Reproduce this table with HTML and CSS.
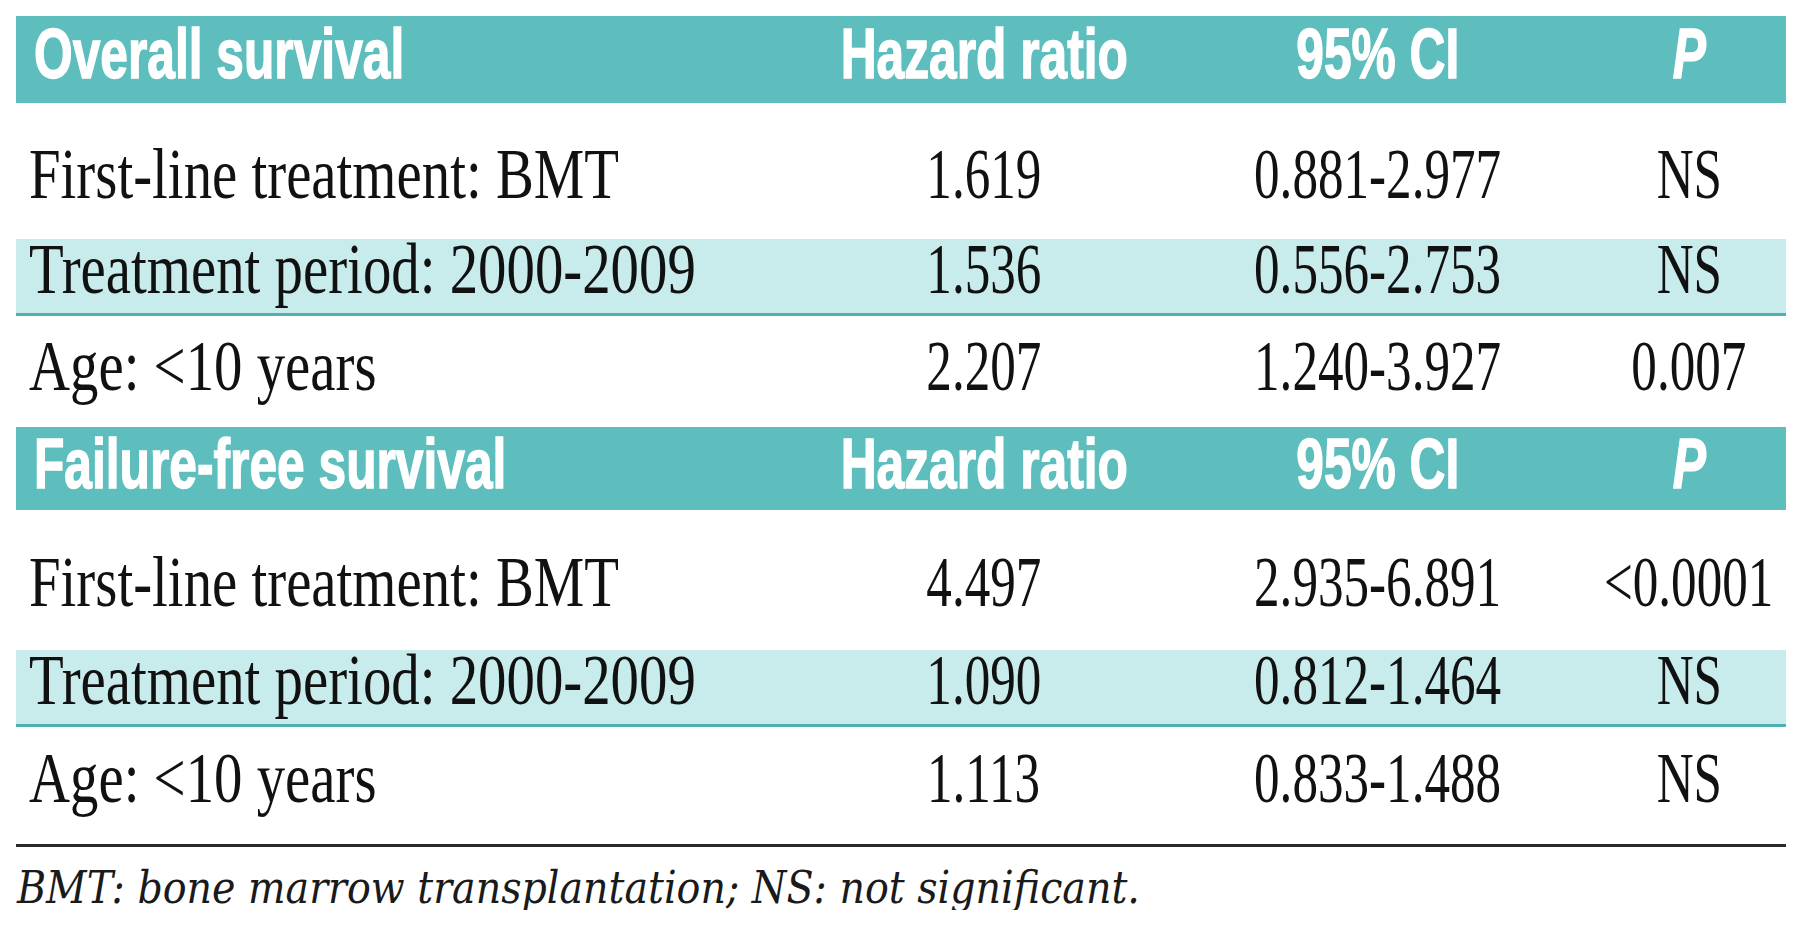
FILE: index.html
```html
<!DOCTYPE html>
<html lang="en">
<head>
<meta charset="utf-8">
<title>Hazard ratios</title>
<link rel="stylesheet" href="styles.css">
</head>
<body>
<div class="table">
  <div class="row head head-1">
    <div class="cell lead"><span class="hx left">Overall survival</span></div>
    <div class="cell"><span class="hx">Hazard ratio</span></div>
    <div class="cell"><span class="hx">95% CI</span></div>
    <div class="cell"><span class="hx ital">P</span></div>
  </div>
  <div class="row first first-1">
    <div class="cell lead"><span class="tx">First-line treatment: BMT</span></div>
    <div class="cell"><span class="nx">1.619</span></div>
    <div class="cell"><span class="nx">0.881-2.977</span></div>
    <div class="cell"><span class="nx">NS</span></div>
  </div>
  <div class="row band">
    <div class="cell lead"><span class="tx">Treatment period: 2000-2009</span></div>
    <div class="cell"><span class="nx">1.536</span></div>
    <div class="cell"><span class="nx">0.556-2.753</span></div>
    <div class="cell"><span class="nx">NS</span></div>
  </div>
  <div class="row last last-1">
    <div class="cell lead"><span class="tx">Age: &lt;10 years</span></div>
    <div class="cell"><span class="nx">2.207</span></div>
    <div class="cell"><span class="nx">1.240-3.927</span></div>
    <div class="cell"><span class="nx">0.007</span></div>
  </div>
  <div class="row head head-2">
    <div class="cell lead"><span class="hx left">Failure-free survival</span></div>
    <div class="cell"><span class="hx">Hazard ratio</span></div>
    <div class="cell"><span class="hx">95% CI</span></div>
    <div class="cell"><span class="hx ital">P</span></div>
  </div>
  <div class="row first first-2">
    <div class="cell lead"><span class="tx">First-line treatment: BMT</span></div>
    <div class="cell"><span class="nx">4.497</span></div>
    <div class="cell"><span class="nx">2.935-6.891</span></div>
    <div class="cell"><span class="nx">&lt;0.0001</span></div>
  </div>
  <div class="row band">
    <div class="cell lead"><span class="tx">Treatment period: 2000-2009</span></div>
    <div class="cell"><span class="nx">1.090</span></div>
    <div class="cell"><span class="nx">0.812-1.464</span></div>
    <div class="cell"><span class="nx">NS</span></div>
  </div>
  <div class="row last last-2">
    <div class="cell lead"><span class="tx">Age: &lt;10 years</span></div>
    <div class="cell"><span class="nx">1.113</span></div>
    <div class="cell"><span class="nx">0.833-1.488</span></div>
    <div class="cell"><span class="nx">NS</span></div>
  </div>
</div>
<p class="note">BMT: bone marrow transplantation; NS: not significant.</p>
</body>
</html>
```
FILE: styles.css
```css
html, body {
  margin: 0;
  padding: 0;
  background: #ffffff;
}

body {
  padding: 16px 14px 0 16px;
  font-family: "Liberation Serif", "Times New Roman", serif;
  color: #111111;
}

.table {
  width: 1770px;
}

.row {
  display: grid;
  grid-template-columns: 788px 360px 428px 194px;
  box-sizing: border-box;
}

.cell {
  display: flex;
  justify-content: center;
  align-items: flex-start;
  white-space: nowrap;
  min-width: 0;
}

.cell.lead {
  justify-content: flex-start;
  padding-left: 13px;
}

/* header bars */
.head {
  background: #5ebdbd;
  color: #ffffff;
  font-family: "Liberation Sans", Arial, sans-serif;
  font-weight: 700;
  font-size: 70px;
  line-height: 50px;
}

.head-1 {
  height: 87px;
  padding-top: 13px;
}

.head-2 {
  height: 83px;
  padding-top: 12px;
}

.hx {
  display: inline-block;
  flex: none;
  transform: scaleX(0.71);
  transform-origin: center;
  -webkit-text-stroke: 1.5px #ffffff;
}

.hx.left {
  transform-origin: left;
  margin-left: 5px;
}

.hx.ital {
  font-style: italic;
}

/* body rows */
.first,
.band,
.last {
  font-size: 71px;
  line-height: 50px;
}

.tx {
  display: inline-block;
  flex: none;
  transform: scaleX(0.8);
  transform-origin: left;
}

.nx {
  display: inline-block;
  flex: none;
  transform: scaleX(0.72);
  transform-origin: center;
}

.first-1 {
  height: 136px;
  padding-top: 46px;
}

.first-2 {
  height: 140px;
  padding-top: 47px;
}

.band {
  height: 77px;
  padding-top: 5px;
  background: #c8ebeb;
  border-bottom: 3px solid #4fb0b0;
}

.last-1 {
  height: 111px;
  padding-top: 25px;
}

.last-2 {
  height: 120px;
  padding-top: 26px;
  border-bottom: 3px solid #2b2b2b;
}

.note {
  margin: 19px 0 0 1px;
  font-family: "DejaVu Serif Condensed", "DejaVu Serif", serif;
  font-stretch: condensed;
  font-style: italic;
  font-size: 44px;
  line-height: 44px;
  color: #1a1a1a;
  white-space: nowrap;
}
```
